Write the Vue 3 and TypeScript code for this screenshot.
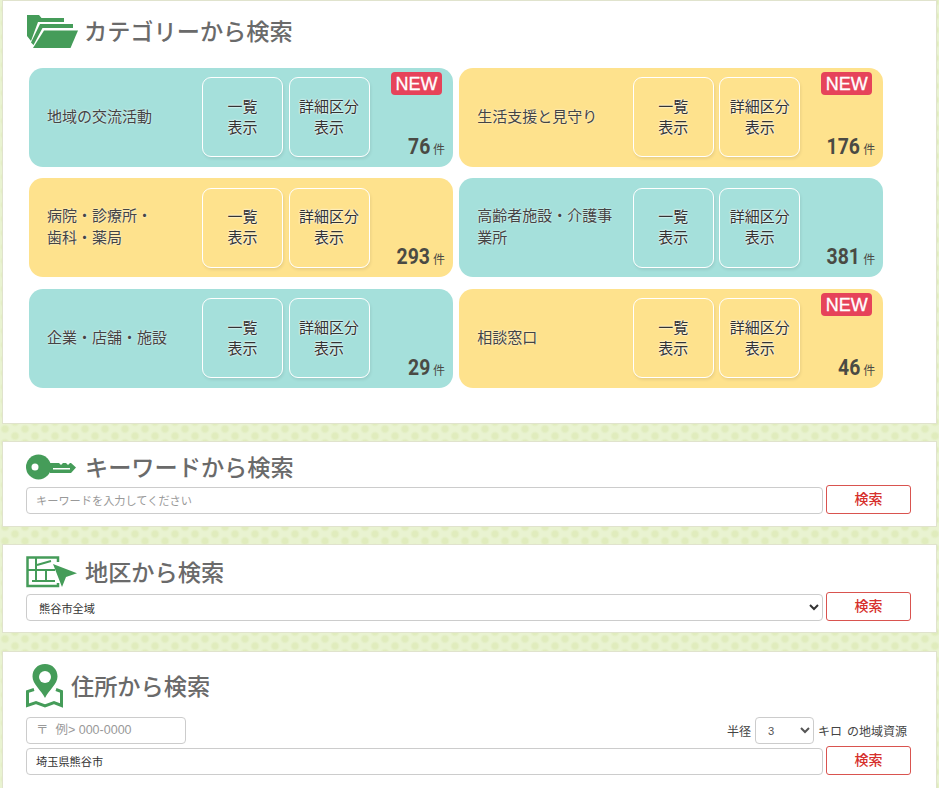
<script setup lang="ts">
interface Cat { name: string[]; count: number; tone: string; isNew: boolean }
const cats: Cat[] = [
  { name: ['地域の交流活動'], count: 76, tone: 'teal', isNew: true },
  { name: ['生活支援と見守り'], count: 176, tone: 'yellow', isNew: true },
  { name: ['病院・診療所・', '歯科・薬局'], count: 293, tone: 'yellow', isNew: false },
  { name: ['高齢者施設・介護事', '業所'], count: 381, tone: 'teal', isNew: false },
  { name: ['企業・店舗・施設'], count: 29, tone: 'teal', isNew: false },
  { name: ['相談窓口'], count: 46, tone: 'yellow', isNew: true },
]
</script>

<template>
  <div class="page">
    <section class="panel p-cat">
      <h2 class="head head-cat">
        <svg class="ic" width="52" height="34" viewBox="0 0 52 34">
          <path d="M1 1H13L15.500 4H38V8H12L5 27L1 22Z" fill="#459c59"/>
          <path d="M14 10H47V14H16.500L7.500 31L5 28.500Z" fill="#459c59"/>
          <path d="M18 16.500H52L44.500 34H7Z" fill="#459c59"/>
        </svg>
        <span class="ttl">カテゴリーから検索</span>
      </h2>
      <div class="grid">
        <div v-for="c in cats" :key="c.name[0]" class="card" :class="c.tone">
          <div class="cname"><span v-for="l in c.name" :key="l">{{ l }}</span></div>
          <a class="cbtn">一覧<br>表示</a>
          <a class="cbtn">詳細区分<br>表示</a>
          <div class="cside">
            <span v-if="c.isNew" class="new">NEW</span>
            <span class="count"><b>{{ c.count }}</b><small>件</small></span>
          </div>
        </div>
      </div>
    </section>

    <section class="panel p-key">
      <h2 class="head head-key">
        <svg class="ic" width="50" height="26" viewBox="0 0 50 26">
          <circle cx="12.500" cy="13" r="12.500" fill="#459c59"/>
          <circle cx="9" cy="13" r="3.500" fill="#fff"/>
          <path d="M24 9H33L35 11L37 9H40L42 11L44 9H45L50 13.500L45 19H24Z" fill="#459c59"/>
          <path d="M27 14H44V15.500H27Z" fill="#fff"/>
        </svg>
        <span class="ttl">キーワードから検索</span>
      </h2>
      <div class="row">
        <input class="field" placeholder="キーワードを入力してください">
        <button class="go">検索</button>
      </div>
    </section>

    <section class="panel p-area">
      <h2 class="head head-area">
        <svg class="ic" width="51" height="32" viewBox="0 0 51 32">
          <path d="M32 6V1.500H1.500V30H32V27" fill="none" stroke="#459c59" stroke-width="2.500"/>
          <path d="M1.500 14H29M10 1.500V25M20 14V25M6 25H29M11 9L25 5" fill="none" stroke="#459c59" stroke-width="2"/>
          <path d="M27 8L51 17.300L40 21L36 31Z" fill="#459c59"/>
        </svg>
        <span class="ttl">地区から検索</span>
      </h2>
      <div class="row">
        <select class="field sel"><option>熊谷市全域</option></select>
        <button class="go">検索</button>
      </div>
    </section>

    <section class="panel p-addr">
      <h2 class="head head-addr">
        <svg class="ic" width="37" height="44" viewBox="0 0 37 44">
          <path d="M8 25.500L1.500 27.500V41.500L10 38.500L19 42L28 38.500L35.500 41.500V27.500L30 25.500" fill="none" stroke="#459c59" stroke-width="3"/>
          <path d="M19 0C11.500 0 6.500 5.500 6.500 12.500C6.500 20 15 26 19 34C23 26 31.500 20 31.500 12.500C31.500 5.500 26.500 0 19 0Z" fill="#459c59"/>
          <circle cx="19" cy="13" r="6" fill="#fff"/>
        </svg>
        <span class="ttl">住所から検索</span>
      </h2>
      <div class="zip-row">
        <input class="field zip" placeholder="〒  例> 000-0000">
        <div class="radius">
          <span>半径</span>
          <select class="rsel"><option>3</option></select>
          <span>キロ</span>
          <span class="res">の地域資源</span>
        </div>
      </div>
      <div class="row">
        <input class="field val" value="埼玉県熊谷市">
        <button class="go">検索</button>
      </div>
    </section>
  </div>
</template>

<style>
html, body { margin: 0; height: 788px; overflow: hidden; }
</style>

<style scoped>
.page {
  width: 939px;
  height: 788px;
  overflow: hidden;
  box-sizing: border-box;
  padding: 0 2px;
  font-family: "Open Sans", "Noto Sans CJK JP", sans-serif;
  background-color: #e9f3d1;
  background-image: radial-gradient(circle, #e0ecbd 2.5px, transparent 5px), radial-gradient(circle, #e0ecbd 2.5px, transparent 5px);
  background-size: 20px 14px;
  background-position: -5px 2px, 5px 9px;
}
.panel {
  background: #fff;
  border: 1px solid #e0e3cd;
  box-sizing: border-box;
  margin-bottom: 17px;
  padding: 0 25px 0 23px;
}
.p-cat { height: 424px; }
.p-key { height: 85.500px; }
.p-area { height: 89.500px; margin-bottom: 17.500px; }
.p-addr { height: 160px; }
.head {
  margin: 0;
  display: flex;
  align-items: center;
  font-weight: 500;
  color: #6a6a6a;
  font-size: 23.200px;
  font-family: "Noto Sans CJK JP", sans-serif;
  white-space: nowrap;
}
.head .ic { flex: none; }
.ttl { line-height: 30px; padding-bottom: 3px; }
.head-cat { padding-top: 13px; height: 34px; gap: 6px; }
.head-key { padding-top: 12px; height: 26px; gap: 9px; }
.head-area { padding-top: 11.500px; height: 32px; gap: 8px; }
.head-addr { padding-top: 12.500px; height: 44px; gap: 8px; }
.grid {
  display: grid;
  grid-template-columns: 424px 424px;
  grid-auto-rows: 99px;
  column-gap: 6.200px;
  row-gap: 11.500px;
  margin: 19.600px 0 0 3px;
}
.card {
  border-radius: 14px;
  display: flex;
  align-items: center;
  position: relative;
  box-sizing: border-box;
  padding-left: 18px;
  color: #444;
}
.teal { background: #a5e0db; }
.yellow { background: #fee28d; }
.cname {
  width: 155px;
  font-size: 15px;
  line-height: 22px;
  padding-bottom: 3px;
  display: flex;
  flex-direction: column;
  font-family: "Noto Sans CJK JP", sans-serif;
  text-shadow: 0 0 2px #fff;
  white-space: nowrap;
}
.card:nth-child(even) .cname { width: 155.500px; }
.cbtn {
  width: 81px;
  height: 80px;
  box-sizing: border-box;
  margin-right: 5.500px;
  padding-bottom: 3px;
  border: 1px solid #fff;
  border-radius: 9px;
  display: flex;
  align-items: center;
  justify-content: center;
  text-align: center;
  font-size: 15px;
  line-height: 21px;
  font-family: "Noto Sans CJK JP", sans-serif;
  color: #333;
  text-shadow: 0 0 2px #fff, 0 0 2px #fff;
  box-shadow: 1px 2px 3px rgba(0, 0, 0, .08);
}
.cside { flex: 1; align-self: stretch; position: relative; }
.new {
  position: absolute;
  top: 4px;
  right: 11px;
  width: 51px;
  height: 23px;
  border-radius: 4px;
  background: #e6435a;
  color: #fff;
  font: 400 18px/24px "Liberation Sans", sans-serif;
  -webkit-text-stroke: .3px #fff;
  text-align: center;
}
.count {
  position: absolute;
  right: 8px;
  bottom: 8px;
  display: flex;
  align-items: baseline;
  color: #4a4a44;
  white-space: nowrap;
}
.count b {
  display: inline-block;
  font: 700 22px/24px Roboto, sans-serif;
  transform: scaleX(.88);
  transform-origin: right center;
}
.count small { font-size: 12px; margin-left: 3px; font-family: "Noto Sans CJK JP", sans-serif; }
.row { display: flex; gap: 3px; align-items: flex-start; }
.field {
  box-sizing: border-box;
  flex: none;
  width: 797px;
  height: 27px;
  border: 1px solid #ccc;
  border-radius: 4px;
  background: #fff;
  padding: 0 9px 2px;
  font-size: 11.200px;
  font-family: "Noto Sans CJK JP", sans-serif;
  color: #333;
  outline: none;
}
.field::placeholder { color: #999; opacity: 1; }
.sel { padding: 0 0 0 8px; }
.go {
  box-sizing: border-box;
  flex: none;
  width: 85px;
  height: 29px;
  margin-top: -2px;
  border: 1px solid #d9534f;
  border-radius: 3px;
  background: #fff;
  color: #d6302c;
  font-size: 14px;
  font-weight: 500;
  font-family: "Noto Sans CJK JP", sans-serif;
  padding: 0 0 4px;
}
.head-key + .row { margin-top: 7px; }
.head-area + .row { margin-top: 6px; }
.zip-row {
  display: flex;
  justify-content: space-between;
  width: 885px;
  height: 27px;
  margin-top: 9px;
  margin-bottom: 4px;
}
.zip {
  width: 160px;
  font-size: 12.500px;
  font-family: "Liberation Sans", "Noto Sans CJK JP", sans-serif;
}
.radius {
  display: flex;
  align-items: center;
  gap: 4px;
  font-size: 12px;
  color: #444;
  padding-right: 4px;
  font-family: "Noto Sans CJK JP", sans-serif;
}
.res { margin-left: 1px; }
.rsel {
  box-sizing: border-box;
  width: 59px;
  height: 27px;
  border: 1px solid #ccc;
  border-radius: 4px;
  background: #fff;
  padding: 0 8px;
  font-size: 11.200px;
  color: #555;
}
</style>
